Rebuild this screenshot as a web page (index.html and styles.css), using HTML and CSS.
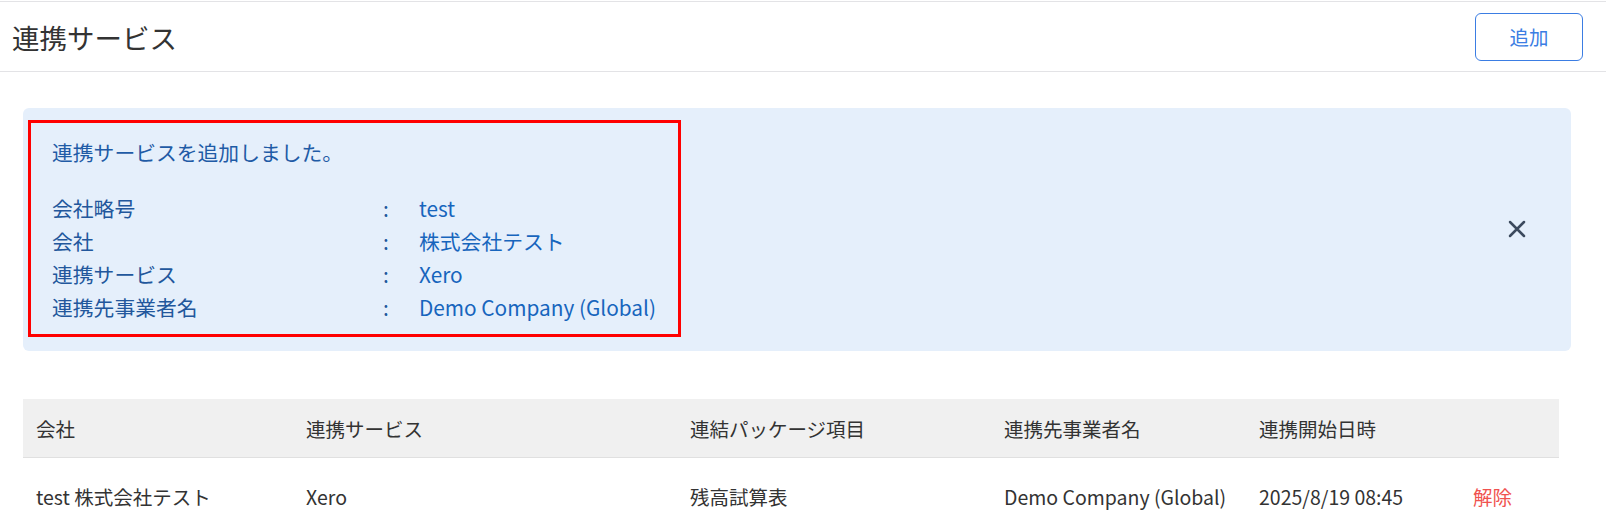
FILE: index.html
```html
<!DOCTYPE html>
<html lang="ja">
<head>
    <meta charset="UTF-8">
    <meta name="viewport" content="width=device-width, initial-scale=1.0">
    <title>連携サービス</title>
    <link rel="stylesheet" href="styles.css">
</head>
<body>

    <div class="page-header">
        <h1 class="page-title">連携サービス</h1>
        <button class="btn-add" type="button">追加</button>
    </div>

    <div class="alert">
        <div class="alert-body">
            <p class="alert-message">連携サービスを追加しました。</p>
            <div class="alert-detail">
                <span class="detail-label">会社略号</span><span class="detail-colon">:</span><span class="detail-value">test</span>
                <span class="detail-label">会社</span><span class="detail-colon">:</span><span class="detail-value">株式会社テスト</span>
                <span class="detail-label">連携サービス</span><span class="detail-colon">:</span><span class="detail-value">Xero</span>
                <span class="detail-label">連携先事業者名</span><span class="detail-colon">:</span><span class="detail-value">Demo Company (Global)</span>
            </div>
        </div>
        <button class="alert-close" type="button" aria-label="閉じる">
            <svg width="18" height="18" viewBox="0 0 18 18">
                <path d="M2 2 L16 16 M16 2 L2 16" stroke="#3c4a5e" stroke-width="2.5" stroke-linecap="round"/>
            </svg>
        </button>
    </div>

    <table class="service-table">
        <colgroup>
            <col class="col-company">
            <col class="col-service">
            <col class="col-package">
            <col class="col-partner">
            <col class="col-date">
            <col class="col-action">
        </colgroup>
        <thead>
            <tr>
                <th>会社</th>
                <th>連携サービス</th>
                <th>連結パッケージ項目</th>
                <th>連携先事業者名</th>
                <th>連携開始日時</th>
                <th></th>
            </tr>
        </thead>
        <tbody>
            <tr>
                <td>test 株式会社テスト</td>
                <td>Xero</td>
                <td>残高試算表</td>
                <td>Demo Company (Global)</td>
                <td>2025/8/19 08:45</td>
                <td><a class="link-remove" href="#">解除</a></td>
            </tr>
        </tbody>
    </table>

</body>
</html>
```

FILE: styles.css
```css
body {
    font-family: "Noto Sans CJK JP", "Noto Sans", sans-serif;
    background-color: #fff;
    color: #333;
    margin: 0;
    padding: 0;
}
.page-header {
    display: flex;
    align-items: center;
    justify-content: space-between;
    height: 69px;
    margin-top: 1px;
    padding: 0 23px 0 12px;
    border-top: 1px solid #e3e3e6;
    border-bottom: 1px solid #e3e3e6;
}
.page-title {
    margin: 0;
    font-size: 27.5px;
    font-weight: normal;
    color: #333;
}
.btn-add {
    width: 108px;
    height: 48px;
    background-color: #fff;
    border: 1px solid #3b7de3;
    border-radius: 6px;
    color: #3b7de3;
    font-family: inherit;
    font-size: 19.5px;
    cursor: pointer;
}
.alert {
    display: flex;
    align-items: center;
    justify-content: space-between;
    margin: 36px 35px 0 23px;
    padding: 12px 45px 14px 5px;
    background-color: #e5effb;
    border-radius: 6px;
}
.alert-body {
    padding: 13px 22px 10px 21px;
    border: 3px solid #f00;
    font-size: 20.8px;
    line-height: 33px;
}
.alert-message {
    margin: 0 0 23px 0;
    color: #1f5ba6;
}
.alert-detail {
    display: grid;
    grid-template-columns: 331px 36px auto;
}
.detail-label {
    color: #22579c;
}
.detail-colon {
    color: #22579c;
}
.detail-value {
    color: #1765bd;
}
.alert-close {
    width: 18px;
    height: 18px;
    padding: 0;
    border: none;
    background: none;
    cursor: pointer;
}
.service-table {
    width: 1536px;
    margin: 48px 0 0 23px;
    border-collapse: collapse;
    table-layout: fixed;
    font-size: 19.5px;
}
.col-company { width: 270px; }
.col-service { width: 384px; }
.col-package { width: 314px; }
.col-partner { width: 255px; }
.col-date { width: 214px; }
.service-table th {
    height: 58px;
    padding: 0 0 0 13px;
    background-color: #f0f0f0;
    border-bottom: 1px solid #e0e0e0;
    text-align: left;
    font-weight: normal;
    color: #333;
}
.service-table td {
    height: 76px;
    padding: 0 0 0 13px;
    color: #333;
}
.link-remove {
    color: #f0524f;
    text-decoration: none;
}
```
